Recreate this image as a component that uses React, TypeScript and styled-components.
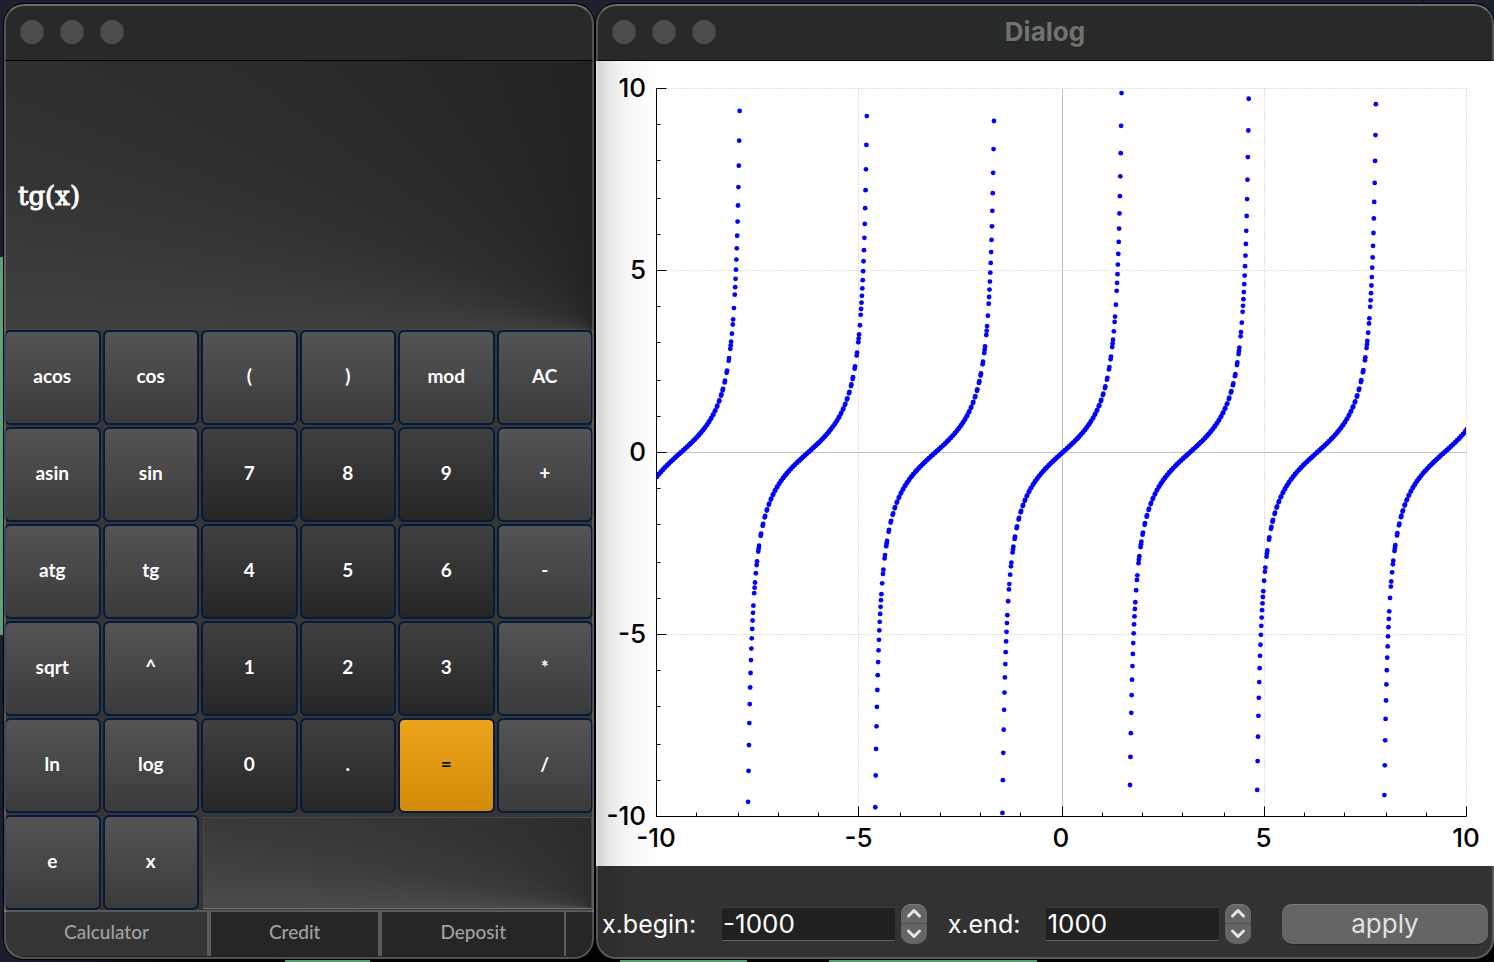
import React, { useState } from "react";
import styled, { createGlobalStyle, css } from "styled-components";

const GlobalStyle = createGlobalStyle`
  *, *::before, *::after { box-sizing: border-box; }
  body { margin: 0; background: #06070b; }
  button, input { font: inherit; margin: 0; }
`;

const SANS = `Inter, "Liberation Sans", sans-serif`;
const KEYPAD = `Lato, "Open Sans", sans-serif`;

/* ---------- desktop and window chrome ---------- */

const Desktop = styled.main`
  min-height: 100vh;
  display: grid;
  grid-template-columns: 295fr 449fr;
  gap: 2px;
  padding: 4px 0 3px 4px;
  background:
    linear-gradient(#5fa07f, #5fa07f) 0 257px / 3px 378px no-repeat,
    linear-gradient(#5a9a74, #5a9a74) 285px 100% / 85px 3px no-repeat,
    linear-gradient(#5a9a74, #5a9a74) 620px 100% / 127px 2px no-repeat,
    linear-gradient(#5a9a74, #5a9a74) 829px 100% / 208px 2px no-repeat,
    linear-gradient(#000, #000) 1422px 0 / 1px 4px no-repeat,
    linear-gradient(#1c2130, #1c2130) 0 0 / 100% 30px no-repeat,
    linear-gradient(90deg, #1a1f2b 4px, #000 200px);
`;

const Window = styled.section`
  position: relative;
  min-width: 0;
  display: flex;
  flex-direction: column;
  overflow: hidden;
  border-radius: 20px;
  background: #323232;
  box-shadow: 0 0 0 1px #000;

  &::after {
    content: "";
    position: absolute;
    inset: 0;
    border: 2px solid rgba(255, 255, 255, 0.2);
    border-top-color: rgba(255, 255, 255, 0.32);
    border-radius: 20px;
    pointer-events: none;
  }
`;

const TitleBar = styled.header`
  flex: none;
  height: 57px;
  display: grid;
  grid-template-columns: 1fr auto 1fr;
  align-items: center;
  padding: 0 16px;
  background: #282a29;
  border-bottom: 1px solid #000;
`;

const Lights = styled.div`
  display: flex;
  gap: 16px;
`;

const Light = styled.button`
  width: 24px;
  height: 24px;
  padding: 0;
  border: 0;
  border-radius: 50%;
  background: #4c4e4d;
`;

const Title = styled.h1`
  margin: 0;
  color: #70726f;
  font: 700 26px/32px ${SANS};
`;

function WindowTitle({ title }: { title?: string }) {
  return (
    <TitleBar>
      <Lights>
        <Light aria-label="Close" />
        <Light aria-label="Minimize" />
        <Light aria-label="Zoom" />
      </Lights>
      {title && <Title>{title}</Title>}
    </TitleBar>
  );
}

/* ---------- calculator ---------- */

const Display = styled.output`
  flex: none;
  height: 269px;
  display: flex;
  align-items: center;
  padding: 0 14px;
  color: #fff;
  font: 400 26px/32px "DejaVu Serif", serif;
  -webkit-text-stroke: 1px #fff;
  background: conic-gradient(
    from 270deg at 100% 100%,
    #404040 0deg,
    #363636 12deg,
    #2f2f2f 24deg,
    #2a2a2a 45deg,
    #222 90deg
  );
`;

const Keypad = styled.div`
  flex: 1;
  display: grid;
  grid-template-columns: repeat(6, 1fr);
  grid-template-rows: repeat(6, minmax(94px, 1fr));
  gap: 2px;
  padding: 0 1px 0 0;
  background: #363636;
`;

type Tone = "function" | "digit" | "equals";

const tones = {
  function: css`
    color: #fff;
    background: linear-gradient(#545454, #3b3b3b);
  `,
  digit: css`
    color: #fff;
    background: linear-gradient(#404040, #262626);
  `,
  equals: css`
    color: #111;
    background: linear-gradient(#eca31e, #d48c08);
  `,
};

const Key = styled.button<{ $tone: Tone }>`
  min-width: 0;
  padding: 0 0 3px;
  border: 2px solid #061a3c;
  border-radius: 6px;
  font: 700 19px/24px ${KEYPAD};
  ${(p) => tones[p.$tone]}
  background-clip: padding-box;
  background-color: #061a3c;
`;

const EmptyPanel = styled.div`
  grid-column: span 4;
  margin: 2px 1px 1px 2px;
  border: 1px solid #484848;
  border-bottom-color: #777;
  background: conic-gradient(
    from 270deg at 100% 100%,
    #4a4a4a 0deg,
    #3a3a3a 12deg,
    #333 30deg,
    #2b2b2b 90deg
  );
`;

const Tabs = styled.nav`
  flex: none;
  height: 49px;
  display: flex;
  padding: 0 2px 3px;
  border-top: 2px solid #5a5a5a;
  background: #262626;
`;

const Tab = styled.button<{ $active?: boolean; $last?: boolean }>`
  padding: 0 58px 4px;
  border: 0;
  border-right: ${(p) => (p.$last ? 2 : 4)}px solid #5a5a5a;
  color: #a0a0a4;
  background: ${(p) => (p.$active ? "#353535" : "#262626")};
  font: 500 19px/24px ${KEYPAD};
`;

const rows = [
  ["acos", "cos", "(", ")", "mod", "AC"],
  ["asin", "sin", "7", "8", "9", "+"],
  ["atg", "tg", "4", "5", "6", "-"],
  ["sqrt", "^", "1", "2", "3", "*"],
  ["ln", "log", "0", ".", "=", "/"],
  ["e", "x"],
];

const toneOf = (label: string): Tone =>
  label === "=" ? "equals" : /^[0-9.]$/.test(label) ? "digit" : "function";

/* ---------- plot ---------- */

type Point = { x: number; y: number };

const PLOT = { left: 60, top: 27, width: 810, height: 728 };
const LIMIT = 10;
const STEP = 0.01;

const toX = (v: number) => PLOT.left + ((v + LIMIT) / (2 * LIMIT)) * PLOT.width;
const toY = (v: number) => PLOT.top + ((LIMIT - v) / (2 * LIMIT)) * PLOT.height;

// Axis lines and ticks sit on a two-pixel grid that starts at the plot's corner.
const gridX = (v: number) => PLOT.left + 2 * Math.round((toX(v) - PLOT.left) / 2) + 0.5;
const gridY = (v: number) => PLOT.top + 2 * Math.round((toY(v) - PLOT.top) / 2) + 0.5;

// Thins dense data: points are grouped in two-pixel columns, and each column
// keeps its extremes and about one point for every four units of height.
function sample(): Point[] {
  const data: Point[] = [];
  for (let i = -1001; i <= 1001; i++) data.push({ x: i * STEP, y: Math.tan(i * STEP) });

  const column = (p: Point) => Math.floor(toX(p.x) / 2 + 1e-9);
  const visible = (p: Point) => p.y > -LIMIT && p.y < LIMIT;
  const kept: Point[] = [];
  let start = 0;
  while (start < data.length) {
    let end = start + 1;
    let min = start;
    let max = start;
    while (end < data.length && column(data[end]) === column(data[start])) {
      if (data[end].y < data[min].y && visible(data[end])) min = end;
      else if (data[end].y > data[max].y && visible(data[end])) max = end;
      end++;
    }
    const span = Math.abs(toY(data[min].y) - toY(data[max].y)) / 2;
    const modulo = Math.max(1, Math.round((end - start) / (span / 4)));
    for (let i = start; i < end; i++) {
      if (((i - start) % modulo === 0 || i === min || i === max) && visible(data[i])) kept.push(data[i]);
    }
    start = end;
  }
  return kept;
}

const points = sample();
const majors = [-10, -5, 0, 5, 10];
const minors = Array.from({ length: 21 }, (_, i) => i - 10).filter((v) => v % 5 !== 0);

const PlotArea = styled.div`
  flex: none;
  background: linear-gradient(90deg, #cfcfcf 0, #e9e9e9 14px, #f8f8f8 34px, #fff 60px);
`;

const Chart = styled.svg`
  display: block;
  width: 100%;
  height: auto;

  text {
    fill: #000;
    font: 500 26px ${SANS};
  }
`;

function TangentPlot() {
  const x0 = gridX(-LIMIT);
  const x1 = gridX(LIMIT);
  const y0 = gridY(LIMIT);
  const y1 = gridY(-LIMIT);
  return (
    <Chart viewBox="0 0 898 805" role="img" aria-label="Plot of tg(x)">
      <clipPath id="plot-clip">
        <rect x={PLOT.left} y={PLOT.top} width={PLOT.width} height={PLOT.height} />
      </clipPath>
      <g stroke="#c0c0c0" fill="none">
        {majors.map((v) => (
          <g key={v} strokeDasharray={v === 0 ? undefined : "1 2"}>
            <path d={`M${gridX(v)} ${y0}V${y1}`} />
            <path d={`M${x0} ${gridY(v)}H${x1}`} />
          </g>
        ))}
      </g>
      <g fill="#0000ff" clipPath="url(#plot-clip)">
        {points.map((p) => (
          <circle key={p.x} cx={toX(p.x) + 1} cy={toY(p.y) + 1} r="2.4" />
        ))}
      </g>
      <g stroke="#000" fill="none">
        <path d={`M${x0} ${y0}V${y1}H${x1}`} />
        {majors.map((v) => (
          <path key={v} d={`M${x0} ${gridY(v)}h10M${gridX(v)} ${y1}v-10`} />
        ))}
        {minors.map((v) => (
          <path key={v} d={`M${x0} ${gridY(v)}h4M${gridX(v)} ${y1}v-4`} />
        ))}
      </g>
      <g textAnchor="end">
        {majors.map((v) => (
          <text key={v} x="50" y={toY(v) + 9}>{v}</text>
        ))}
      </g>
      <g textAnchor="middle">
        {majors.map((v) => (
          <text key={v} x={toX(v)} y="786">{v}</text>
        ))}
      </g>
    </Chart>
  );
}

/* ---------- range form ---------- */

const RangeForm = styled.form`
  flex: 1;
  display: flex;
  align-items: center;
  padding: 22px 6px 0;
  background: linear-gradient(90deg, #2b2b2b, #323232 40px);
  color: #fff;
  font: 400 26px/32px ${SANS};
`;

const Field = styled.div`
  flex: 1 1 auto;
  min-width: 0;
  display: flex;
  align-items: center;
  margin-right: 21px;
`;

const Label = styled.label`
  flex: none;
  margin-right: 26px;
  font-size: 25px;
`;

const NumberInput = styled.input`
  flex: 1 1 auto;
  width: 60px;
  min-width: 0;
  height: 34px;
  padding: 0 1px;
  border: 0;
  border-top: 1px solid #3a3a3a;
  border-bottom: 1px solid #5e5e5e;
  background: #212121;
  color: #fff;
  outline: none;
`;

const Stepper = styled.div`
  flex: none;
  width: 26px;
  height: 40px;
  margin-left: 6px;
  display: flex;
  flex-direction: column;
  overflow: hidden;
  border-radius: 10px;
  background: #656565;
  box-shadow: inset 0 1px 0 #7c7c7c;
`;

const Step = styled.button`
  flex: 1;
  display: flex;
  align-items: center;
  justify-content: center;
  padding: 0;
  border: 0;
  background: transparent;

  & + & {
    border-top: 1px solid #4e4e4e;
  }

  svg {
    fill: none;
    stroke: #e4e4e4;
    stroke-width: 3;
    stroke-linecap: round;
    stroke-linejoin: round;
  }
`;

const Apply = styled.button`
  flex: 0 0 206px;
  height: 40px;
  margin-left: 10px;
  padding: 0;
  border: 0;
  border-radius: 10px;
  background: #656565;
  box-shadow: inset 0 1px 0 #7c7c7c, 0 1px 1px rgba(0, 0, 0, 0.3);
  color: #e2e2e2;
`;

function RangeField({ id, label, initial }: { id: string; label: string; initial: number }) {
  const [value, setValue] = useState(String(initial));
  const shift = (by: number) => setValue((v) => String((Number(v) || 0) + by));
  return (
    <Field>
      <Label htmlFor={id}>{label}</Label>
      <NumberInput id={id} inputMode="numeric" value={value} onChange={(e) => setValue(e.target.value)} />
      <Stepper>
        <Step type="button" aria-label={`Increase ${label}`} onClick={() => shift(1)}>
          <svg width="16" height="12" viewBox="0 0 16 12"><path d="M2.5 9 8 3.5 13.5 9" /></svg>
        </Step>
        <Step type="button" aria-label={`Decrease ${label}`} onClick={() => shift(-1)}>
          <svg width="16" height="12" viewBox="0 0 16 12"><path d="M2.5 3 8 8.5 13.5 3" /></svg>
        </Step>
      </Stepper>
    </Field>
  );
}

export default function App() {
  return (
    <>
      <GlobalStyle />
      <Desktop>
        <Window aria-label="Calculator">
          <WindowTitle />
          <Display>tg(x)</Display>
          <Keypad>
            {rows.flat().map((label) => (
              <Key key={label} $tone={toneOf(label)}>{label}</Key>
            ))}
            <EmptyPanel />
          </Keypad>
          <Tabs>
            <Tab $active>Calculator</Tab>
            <Tab>Credit</Tab>
            <Tab $last>Deposit</Tab>
          </Tabs>
        </Window>
        <Window aria-label="Dialog">
          <WindowTitle title="Dialog" />
          <PlotArea>
            <TangentPlot />
          </PlotArea>
          <RangeForm onSubmit={(e) => e.preventDefault()}>
            <RangeField id="x-begin" label="x.begin:" initial={-1000} />
            <RangeField id="x-end" label="x.end:" initial={1000} />
            <Apply type="submit">apply</Apply>
          </RangeForm>
        </Window>
      </Desktop>
    </>
  );
}
